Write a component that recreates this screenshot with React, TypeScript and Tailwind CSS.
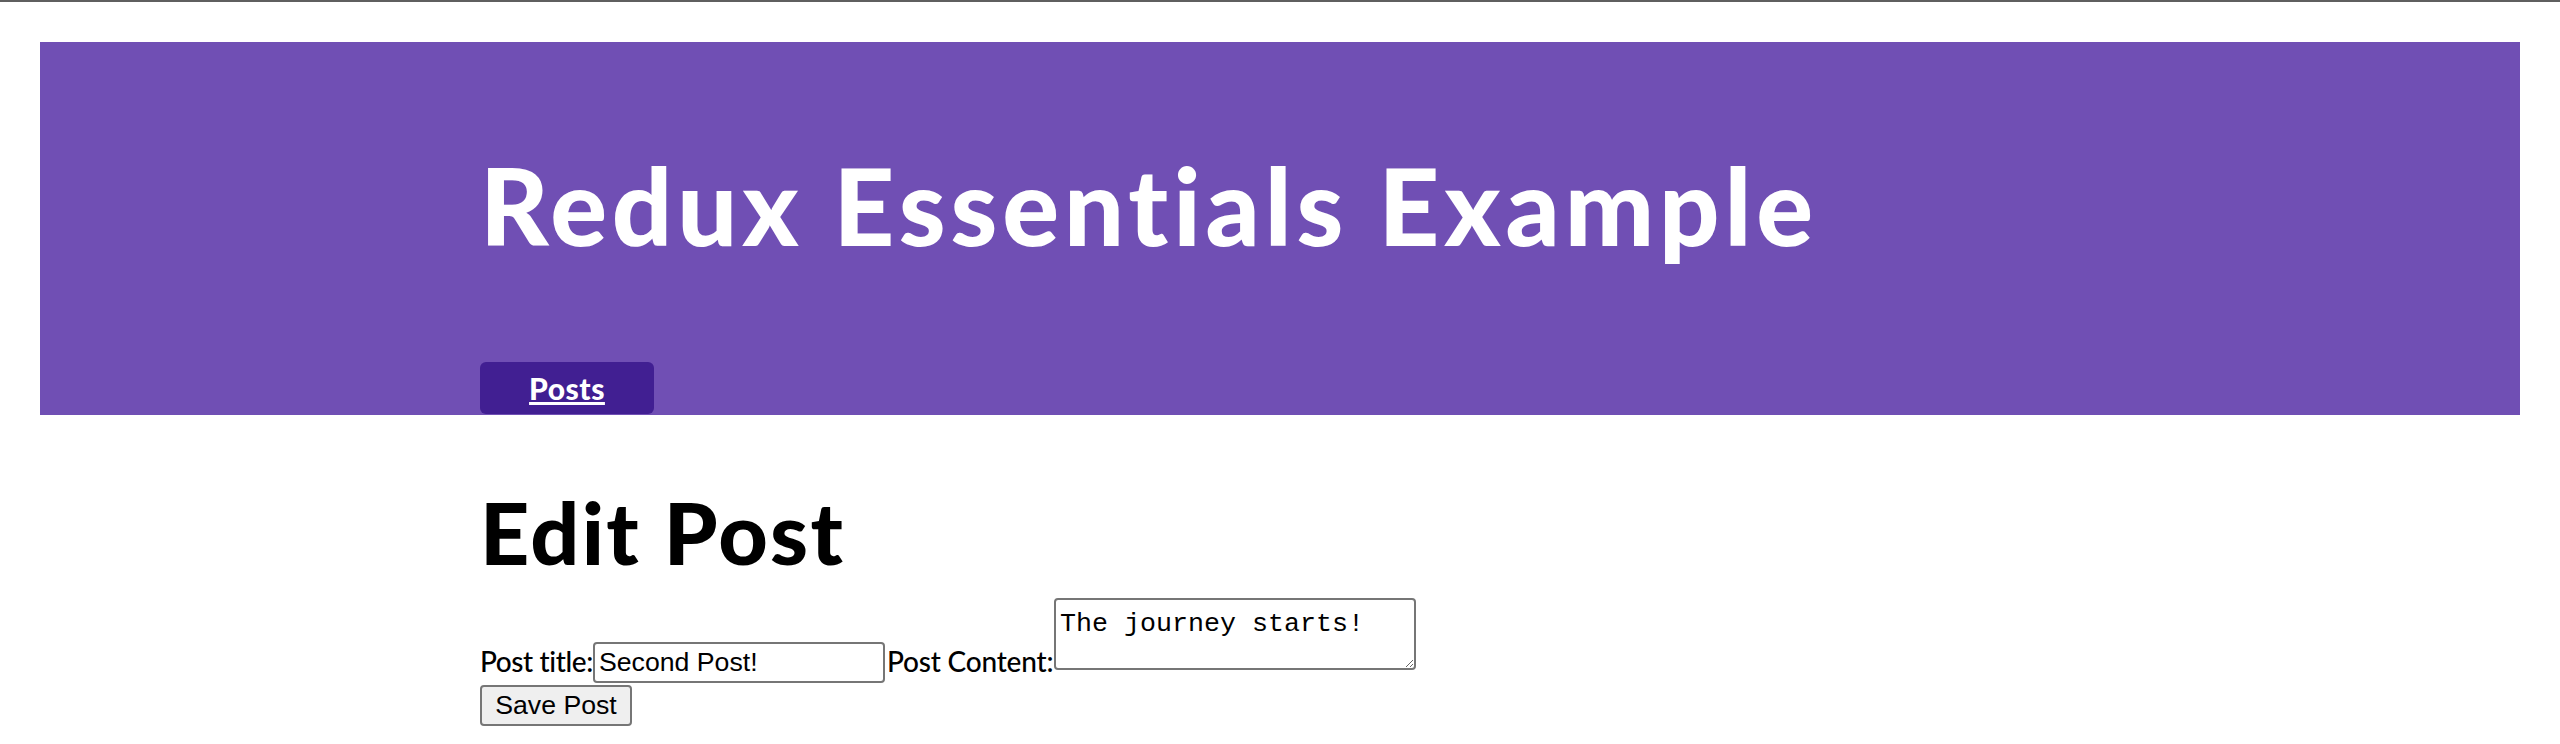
import React from "react";

export default function App() {
  return (
    <div className="min-h-[744px] bg-white text-black font-['Lato','Noto_Sans',sans-serif] [font-variant-ligatures:none]">
      <div className="h-[2px] bg-[#5f5f5f]" />
      <div className="px-[40px] pt-[40px]">
        <nav className="bg-[#704fb4] pb-px">
          <div className="mx-auto w-[1600px] pt-[110px]">
            <h1 className="text-[106px] leading-none font-black tracking-[4.9px] text-white whitespace-nowrap">
              Redux Essentials Example
            </h1>
            <div className="mt-[104px] flex">
              <a
                href="#"
                className="flex h-[52px] w-[174px] items-center justify-center rounded-[6px] bg-[#411f92] text-[30px] font-black leading-none tracking-[0.5px] text-white underline"
              >
                Posts
              </a>
            </div>
          </div>
        </nav>
      </div>
      <main className="mx-auto w-[1600px] pt-[74px]">
        <h2 className="text-[86px] leading-none font-black tracking-[2.3px] whitespace-nowrap">Edit Post</h2>
        <div className="mt-[23px] flex items-start">
          <label className="mt-[49px] w-[113px] shrink-0 whitespace-nowrap text-[28px] font-medium leading-none tracking-[-0.4px]">
            Post title:
          </label>
          <input
            type="text"
            defaultValue="Second Post!"
            className="mt-[44px] box-border h-[41px] w-[292px] shrink-0 rounded-[4px] border-2 border-[#767676] bg-white px-[4px] py-0 font-['Liberation_Sans',Arial,sans-serif] text-[26.67px] text-black outline-none"
          />
          <label className="mt-[49px] w-[169px] shrink-0 whitespace-nowrap pl-[2px] text-[28px] font-medium leading-none tracking-[-0.2px]">
            Post Content:
          </label>
          <textarea
            defaultValue="The journey starts!"
            className="box-border h-[72px] w-[362px] shrink-0 resize rounded-[4px] border-2 border-[#767676] bg-white p-[4px] font-['Liberation_Mono','Courier_New',monospace] text-[26.67px] leading-normal text-black outline-none"
          />
        </div>
        <div className="mt-[2px] flex">
          <button
            type="button"
            className="box-border h-[41px] w-[152px] rounded-[4px] border-2 border-[#767676] bg-[#efefef] p-0 font-['Liberation_Sans',Arial,sans-serif] text-[26.67px] leading-none text-black"
          >
            Save Post
          </button>
        </div>
      </main>
    </div>
  );
}
